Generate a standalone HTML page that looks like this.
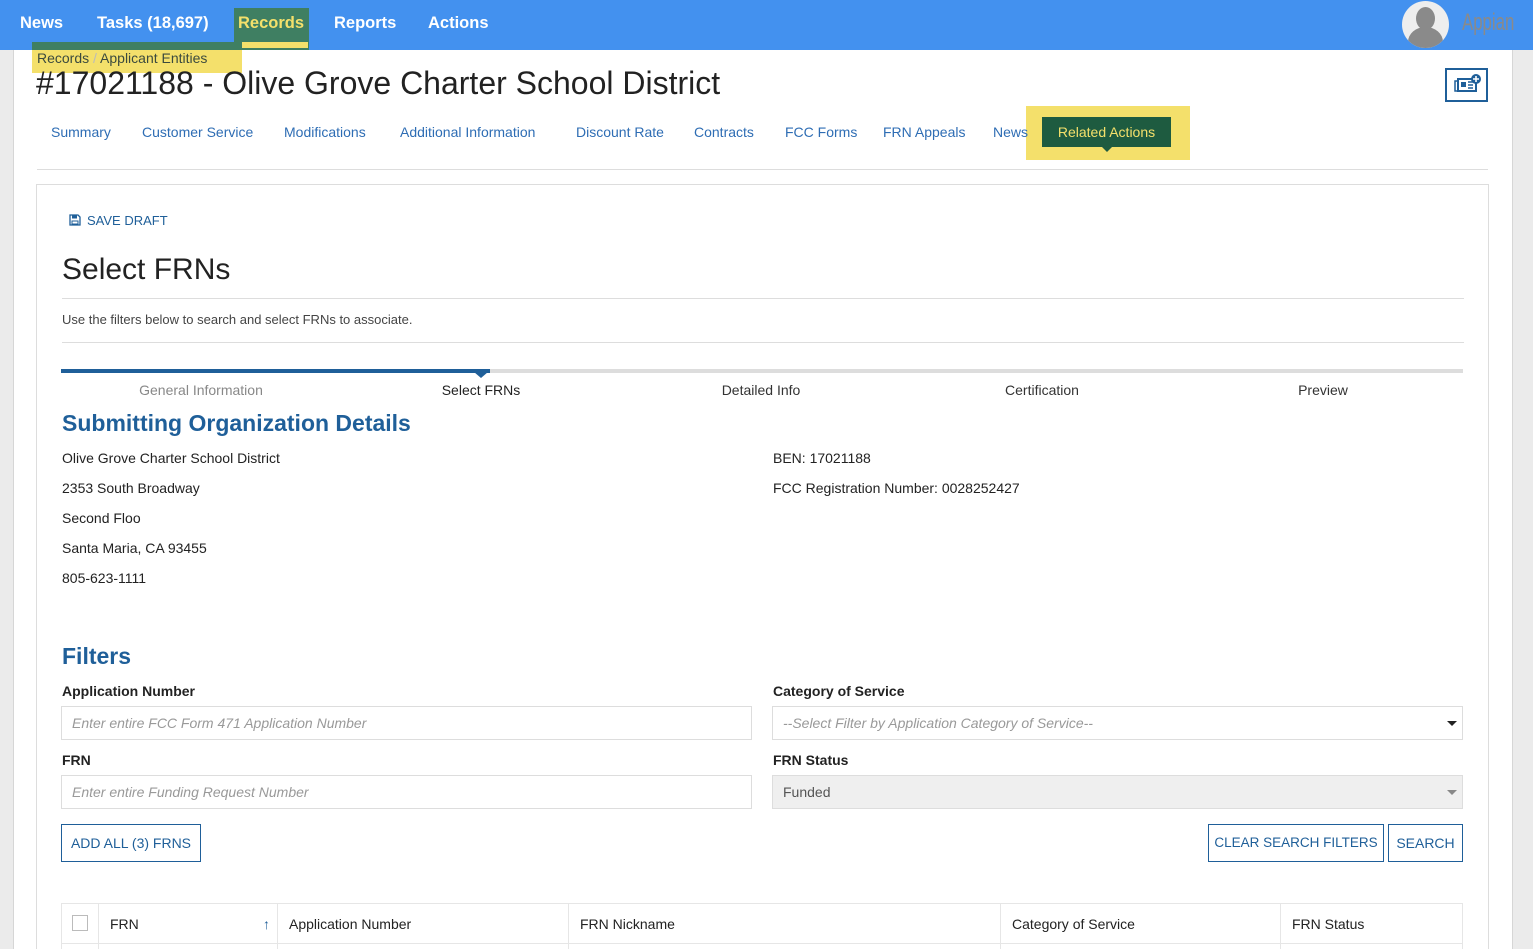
<!DOCTYPE html>
<html><head><meta charset="utf-8"><style>
*{box-sizing:border-box;margin:0;padding:0}
html,body{width:1533px;height:949px;overflow:hidden}
body{background:#ebebeb;font-family:"Liberation Sans",sans-serif;position:relative;color:#222}
.a{position:absolute;white-space:nowrap}
#page{position:absolute;left:13px;top:0;width:1500px;height:949px;background:#fff;border-left:1px solid #d6d6d6;border-right:1px solid #d6d6d6}
#hdr{position:absolute;left:0;top:0;width:1533px;height:50px;background:#4391ef}
.nav{font-size:16.5px;font-weight:bold;color:#fff;top:14px}
.tab{font-size:14px;color:#2e6db4;top:124px}
.lbl{font-size:14px;font-weight:bold;top:683px}
.inp{border:1px solid #ddd;height:34px;font-size:14px;font-style:italic;color:#999;padding:8px 10px}
.btn{border:1px solid #1f5f99;color:#1f5f99;font-size:14px;height:38px;line-height:36px;text-align:center}
.ln{font-size:14px}
.step{font-size:14px;top:382px;width:280px;text-align:center;color:#888}
.th{font-size:14px;top:916px}
</style></head><body>
<div id="page"></div>
<div id="hdr"></div>
<div class="a" style="left:234px;top:8px;width:75px;height:42px;background:#3f7f62"></div>
<div class="a" style="left:230px;top:42px;width:78px;height:6px;background:#f4e06b"></div>
<div class="a nav" style="left:20px">News</div>
<div class="a nav" style="left:97px">Tasks (18,697)</div>
<div class="a nav" style="left:238px;color:#f4e06b">Records</div>
<div class="a nav" style="left:334px">Reports</div>
<div class="a nav" style="left:428px">Actions</div>
<div class="a" style="left:1402px;top:1px;width:47px;height:47px;border-radius:50%;background:#eee;overflow:hidden"><div style="position:absolute;left:14px;top:6px;width:19px;height:23px;border-radius:50%;background:#8a8a8a"></div><div style="position:absolute;left:6px;top:26px;width:35px;height:30px;border-radius:50% 50% 0 0;background:#8a8a8a"></div></div>
<div class="a" style="left:1462px;top:9px;font-size:24px;color:#8a8a8a;transform:scaleX(.7);transform-origin:left">Appian</div>
<div class="a" style="left:32px;top:42px;width:210px;height:31px;background:#f4e06b"></div>
<div class="a" style="left:32px;top:42px;width:210px;height:8px;background:#3f7f62"></div>
<div class="a" style="left:37px;top:50px;font-size:14px;color:#3b4a3e">Records <span style="color:#bbb">/</span> Applicant Entities</div>
<div class="a" style="left:36px;top:65px;font-size:32px;color:#222">#17021188 - Olive Grove Charter School District</div>
<div class="a" style="left:1445px;top:68px;width:43px;height:34px;border:2px solid #1f5f99"><svg width="39" height="30" viewBox="0 0 39 30"><rect x="11" y="9" width="18" height="12" fill="none" stroke="#1f5f99" stroke-width="2"/><rect x="8" y="11" width="3" height="10" fill="none" stroke="#1f5f99" stroke-width="1.5"/><rect x="14" y="12" width="5" height="5" fill="#1f5f99"/><path d="M21 12h5M21 15h5M21 18h5" stroke="#1f5f99" stroke-width="1.5"/><circle cx="29" cy="9" r="5" fill="#1f5f99"/><path d="M29 6v6M26 9h6" stroke="#fff" stroke-width="1.6"/></svg></div>
<div class="a tab" style="left:51px">Summary</div>
<div class="a tab" style="left:142px">Customer Service</div>
<div class="a tab" style="left:284px">Modifications</div>
<div class="a tab" style="left:400px">Additional Information</div>
<div class="a tab" style="left:576px">Discount Rate</div>
<div class="a tab" style="left:694px">Contracts</div>
<div class="a tab" style="left:785px">FCC Forms</div>
<div class="a tab" style="left:883px">FRN Appeals</div>
<div class="a" style="left:1026px;top:106px;width:164px;height:54px;background:#f4e06b"></div>
<div class="a tab" style="left:993px">News</div>
<div class="a" style="left:1042px;top:117px;width:129px;height:30px;background:#1e5b40;color:#f4e06b;font-size:14px;text-align:center;line-height:30px">Related Actions</div>
<div class="a" style="left:1102px;top:147px;width:0;height:0;border-left:5px solid transparent;border-right:5px solid transparent;border-top:5px solid #1e5b40"></div>
<div class="a" style="left:37px;top:169px;width:1451px;height:1px;background:#ddd"></div>
<div class="a" style="left:36px;top:184px;width:1453px;height:780px;border:1px solid #ddd"></div>
<svg class="a" style="left:69px;top:214px" width="12" height="12" viewBox="0 0 12 12"><path d="M1 1h8l2 2v8H1z" fill="none" stroke="#1f5f99" stroke-width="1.3"/><rect x="3" y="1.5" width="5" height="3" fill="#1f5f99"/><rect x="3" y="7" width="6" height="3" fill="none" stroke="#1f5f99"/></svg>
<div class="a" style="left:87px;top:213px;font-size:13px;color:#1f5f99">SAVE DRAFT</div>
<div class="a" style="left:62px;top:253px;font-size:30px;color:#222">Select FRNs</div>
<div class="a" style="left:62px;top:298px;width:1402px;height:1px;background:#ddd"></div>
<div class="a" style="left:62px;top:312px;font-size:13px;color:#444">Use the filters below to search and select FRNs to associate.</div>
<div class="a" style="left:62px;top:342px;width:1402px;height:1px;background:#ddd"></div>
<div class="a" style="left:61px;top:369px;width:1402px;height:4px;background:#ddd"></div>
<div class="a" style="left:61px;top:369px;width:429px;height:4px;background:#1f5f99"></div>
<div class="a" style="left:474px;top:372px;border-left:7px solid transparent;border-right:7px solid transparent;border-top:6px solid #1f5f99"></div>
<div class="a step" style="left:61px">General Information</div>
<div class="a step" style="left:341px;color:#222">Select FRNs</div>
<div class="a step" style="left:621px;color:#333">Detailed Info</div>
<div class="a step" style="left:902px;color:#333">Certification</div>
<div class="a step" style="left:1183px;color:#333">Preview</div>
<div class="a" style="left:62px;top:410px;font-size:23px;font-weight:bold;color:#1f5f99">Submitting Organization Details</div>
<div class="a ln" style="left:62px;top:450px">Olive Grove Charter School District</div>
<div class="a ln" style="left:62px;top:480px">2353 South Broadway</div>
<div class="a ln" style="left:62px;top:510px">Second Floo</div>
<div class="a ln" style="left:62px;top:540px">Santa Maria, CA 93455</div>
<div class="a ln" style="left:62px;top:570px">805-623-1111</div>
<div class="a ln" style="left:773px;top:450px">BEN: 17021188</div>
<div class="a ln" style="left:773px;top:480px">FCC Registration Number: 0028252427</div>
<div class="a" style="left:62px;top:643px;font-size:23px;font-weight:bold;color:#1f5f99">Filters</div>
<div class="a lbl" style="left:62px">Application Number</div>
<div class="a lbl" style="left:773px">Category of Service</div>
<div class="a inp" style="left:61px;top:706px;width:691px">Enter entire FCC Form 471 Application Number</div>
<div class="a inp" style="left:772px;top:706px;width:691px">--Select Filter by Application Category of Service--</div>
<div class="a" style="left:1447px;top:721px;border-left:5px solid transparent;border-right:5px solid transparent;border-top:5px solid #222"></div>
<div class="a lbl" style="left:62px;top:752px">FRN</div>
<div class="a lbl" style="left:773px;top:752px">FRN Status</div>
<div class="a inp" style="left:61px;top:775px;width:691px">Enter entire Funding Request Number</div>
<div class="a inp" style="left:772px;top:775px;width:691px;background:#efefef;font-style:normal;color:#555">Funded</div>
<div class="a" style="left:1447px;top:790px;border-left:5px solid transparent;border-right:5px solid transparent;border-top:5px solid #888"></div>
<div class="a btn" style="left:61px;top:824px;width:140px">ADD ALL (3) FRNS</div>
<div class="a btn" style="left:1208px;top:824px;width:176px;font-size:13.5px">CLEAR SEARCH FILTERS</div>
<div class="a btn" style="left:1388px;top:824px;width:75px">SEARCH</div>
<div class="a" style="left:61px;top:903px;width:1402px;height:60px;border:1px solid #e6e6e6"></div>
<div class="a" style="left:61px;top:943px;width:1402px;height:1px;background:#e6e6e6"></div>
<div class="a" style="left:98px;top:903px;width:1px;height:46px;background:#e6e6e6"></div>
<div class="a" style="left:277px;top:903px;width:1px;height:46px;background:#e6e6e6"></div>
<div class="a" style="left:568px;top:903px;width:1px;height:46px;background:#e6e6e6"></div>
<div class="a" style="left:1000px;top:903px;width:1px;height:46px;background:#e6e6e6"></div>
<div class="a" style="left:1280px;top:903px;width:1px;height:46px;background:#e6e6e6"></div>
<div class="a" style="left:72px;top:915px;width:16px;height:16px;border:1px solid #bbb"></div>
<div class="a th" style="left:110px">FRN</div>
<div class="a th" style="left:263px;color:#1f5f99;font-weight:bold">&#8593;</div>
<div class="a th" style="left:289px">Application Number</div>
<div class="a th" style="left:580px">FRN Nickname</div>
<div class="a th" style="left:1012px">Category of Service</div>
<div class="a th" style="left:1292px">FRN Status</div>
</body></html>
